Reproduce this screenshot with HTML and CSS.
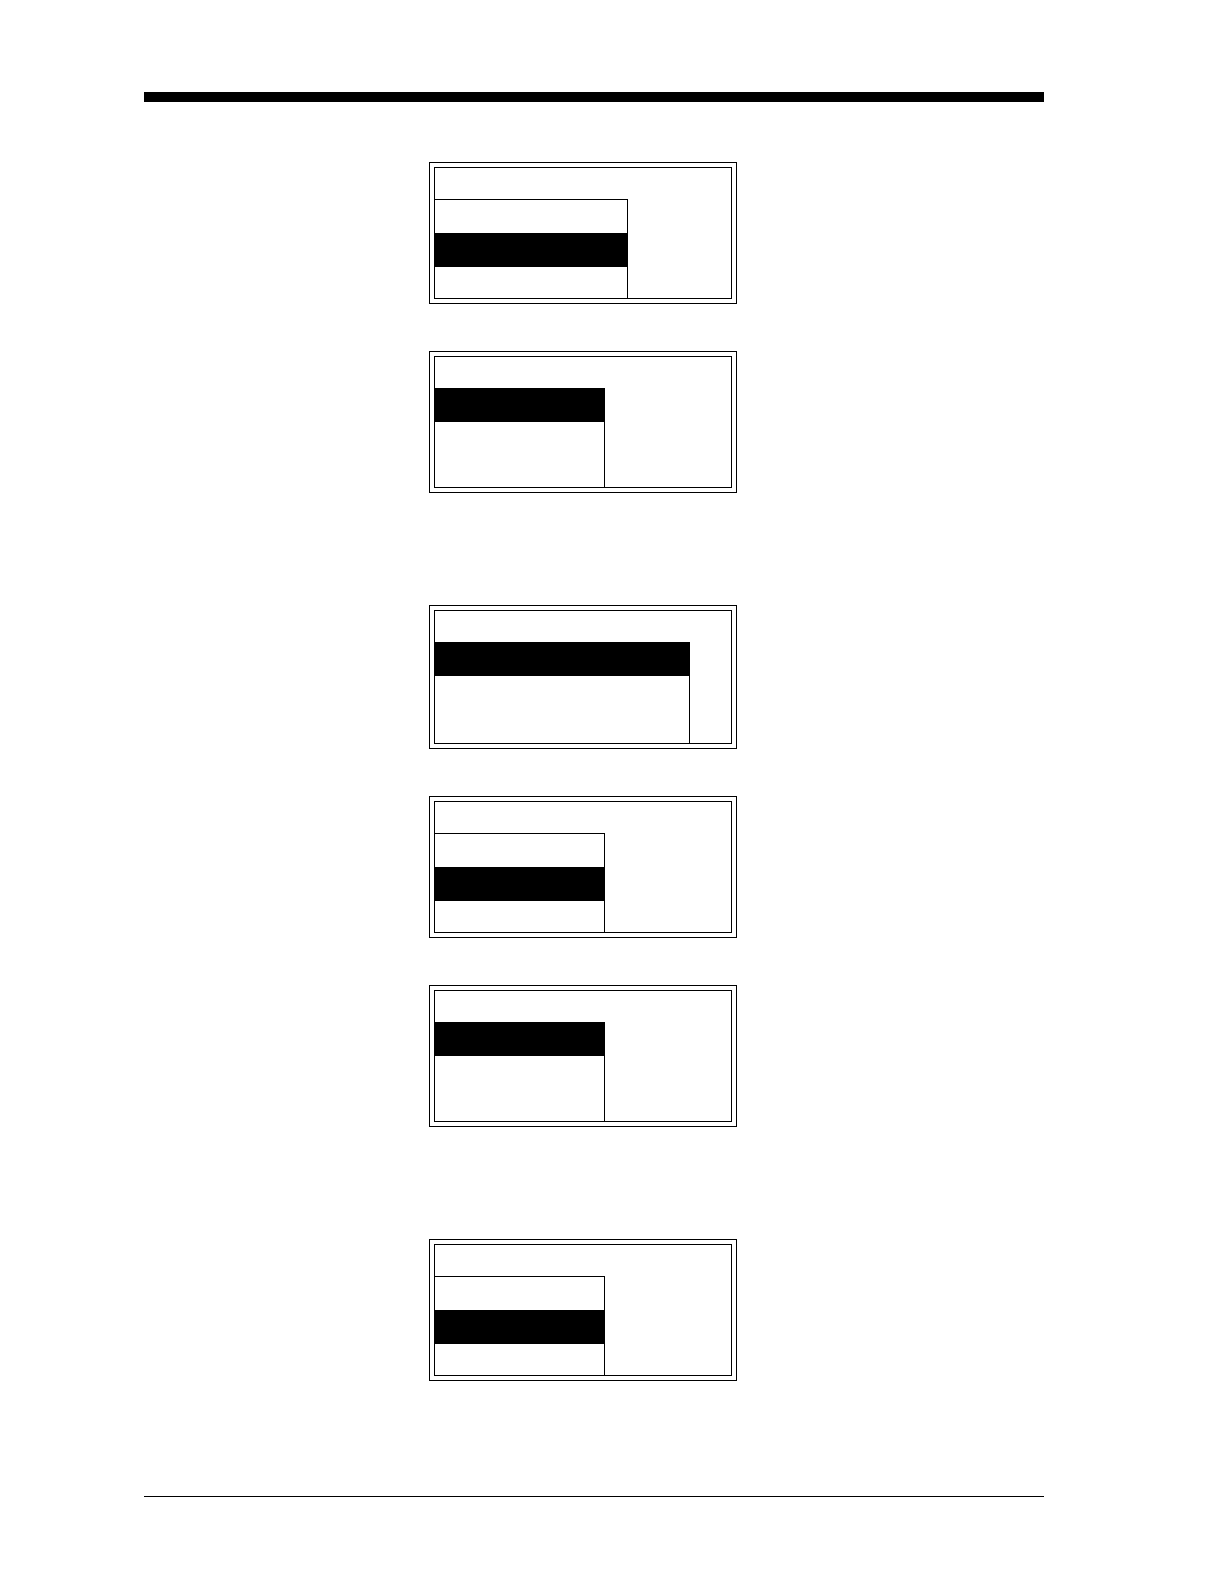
FILE: index.html
```html
<!DOCTYPE html>
<html lang="en">
<head>
    <meta charset="UTF-8">
    <meta name="viewport" content="width=device-width, initial-scale=1.0">
    <title>Menu Screens</title>
    <link rel="stylesheet" href="styles.css">
</head>
<body>
    <header class="page-header"></header>

    <main>
        <section class="group">
            <div class="screen">
                <div class="display">
                    <div class="title"></div>
                    <ul class="menu medium">
                        <li></li>
                        <li class="selected"></li>
                        <li></li>
                    </ul>
                </div>
            </div>
            <div class="screen">
                <div class="display">
                    <div class="title"></div>
                    <ul class="menu">
                        <li class="selected"></li>
                        <li></li>
                        <li></li>
                    </ul>
                </div>
            </div>
        </section>

        <section class="group">
            <div class="screen">
                <div class="display tall">
                    <div class="title"></div>
                    <ul class="menu wide">
                        <li class="selected"></li>
                        <li></li>
                        <li></li>
                    </ul>
                </div>
            </div>
            <div class="screen">
                <div class="display">
                    <div class="title"></div>
                    <ul class="menu">
                        <li></li>
                        <li class="selected"></li>
                        <li></li>
                    </ul>
                </div>
            </div>
            <div class="screen">
                <div class="display">
                    <div class="title"></div>
                    <ul class="menu">
                        <li class="selected"></li>
                        <li></li>
                        <li></li>
                    </ul>
                </div>
            </div>
        </section>

        <section class="group">
            <div class="screen">
                <div class="display">
                    <div class="title"></div>
                    <ul class="menu">
                        <li></li>
                        <li class="selected"></li>
                        <li></li>
                    </ul>
                </div>
            </div>
        </section>
    </main>

    <footer class="page-footer"></footer>
</body>
</html>
```

FILE: styles.css
```css
* {
    box-sizing: border-box;
}
body {
    font-family: "Liberation Sans", Arial, sans-serif;
    display: flex;
    flex-direction: column;
    min-height: 100vh;
    margin: 0;
    padding: 92px 180px 87px 144px;
    background-color: white;
    color: black;
}
.page-header {
    border-top: 10px solid black;
}
.page-footer {
    border-top: 1px solid black;
}
main {
    flex: 1;
    display: flex;
    flex-direction: column;
    gap: 112px;
    padding: 60px 0 60px 285px;
}
.group {
    display: flex;
    flex-direction: column;
    gap: 47px;
}

/* double frame around each display */
.screen {
    width: 308px;
    padding: 4px;
    border: 1px solid black;
}
.display {
    display: flex;
    flex-direction: column;
    min-height: 132px;
    border: 1px solid black;
}
.display.tall {
    min-height: 134px;
}
.title {
    height: 31px;
}

/* pull-down menu */
.menu {
    flex: 1;
    width: 170px;
    margin: 0;
    padding: 0;
    list-style: none;
    border-right: 1px solid black;
}
.menu.medium {
    width: 193px;
}
.menu.wide {
    width: 255px;
}
.menu li {
    height: 34px;
}
.menu li:first-child {
    border-top: 1px solid black;
}
.menu li:last-child {
    height: 31px;
}
.menu .selected {
    background-color: black;
    color: white;
}
```
